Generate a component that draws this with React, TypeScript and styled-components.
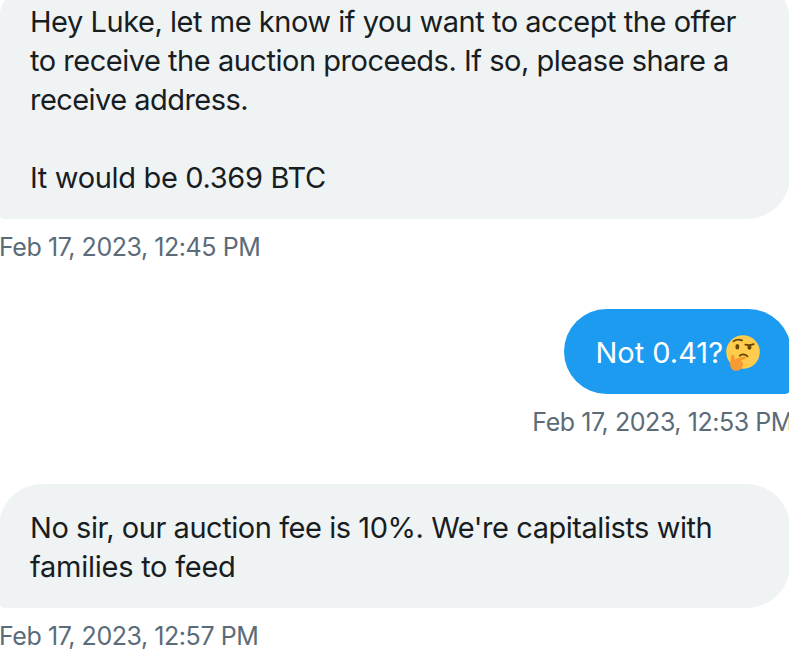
import React from "react";
import styled, { createGlobalStyle } from "styled-components";

const GlobalStyle = createGlobalStyle`
  * { box-sizing: border-box; }
  body {
    margin: 0;
    background: #fff;
    overflow: hidden;
  }
`;

type Side = "in" | "out";

const Conversation = styled.main`
  display: flex;
  flex-direction: column;
  gap: 47px;
  width: 791px;
  margin-left: -1px;
  margin-top: -22px;
  font-family: Inter, "Liberation Sans", sans-serif;
`;

const Message = styled.article<{ $side: Side }>`
  display: flex;
  flex-direction: column;
  align-items: ${(p) => (p.$side === "in" ? "stretch" : "flex-end")};
`;

const Bubble = styled.div<{ $side: Side }>`
  display: flex;
  flex-direction: column;
  padding: 24px 31px 22px;
  margin-right: ${(p) => (p.$side === "out" ? "-1px" : "0")};
  border-radius: ${(p) => (p.$side === "in" ? "43px 43px 43px 6px" : "43px 43px 6px 43px")};
  background: ${(p) => (p.$side === "in" ? "#eff3f4" : "#1d9bf0")};
  color: ${(p) => (p.$side === "in" ? "#181d22" : "#fff")};
`;

const Line = styled.span<{ $tracking: number }>`
  display: flex;
  align-items: center;
  height: 39px;
  font-size: 29px;
  line-height: 39px;
  white-space: pre;
  letter-spacing: ${(p) => p.$tracking}px;
`;

const Time = styled.time<{ $side: Side }>`
  height: 43px;
  padding-top: 11px;
  margin-right: ${(p) => (p.$side === "out" ? "-3px" : "0")};
  font-size: 25px;
  line-height: 34px;
  white-space: pre;
  letter-spacing: -0.44px;
  color: #5b6b78;
`;

const Emoji = styled.svg`
  width: 34px;
  height: 36px;
  margin-left: 3px;
`;

const ThinkingFace = () => (
  <Emoji viewBox="0 0 36 38" role="img" aria-label="Thinking face">
    <circle cx="18" cy="18" r="17.8" fill="#ffcc4d" />
    <ellipse cx="12" cy="12.4" rx="2.1" ry="2.9" fill="#664500" />
    <ellipse cx="24.800" cy="12.800" rx="2.1" ry="2.9" fill="#664500" />
    <path d="M8 6.500c2.500-1.700 6-2 9-.8" fill="none" stroke="#664500" strokeWidth="1.900" strokeLinecap="round" />
    <path d="M20.500 10.200c3 .8 6 .5 8.800-.6" fill="none" stroke="#664500" strokeWidth="2" strokeLinecap="round" />
    <path d="M14.500 21.800c2.500-1.600 6-1.400 8.300.7" fill="none" stroke="#664500" strokeWidth="1.900" strokeLinecap="round" />
    <path
      d="M5.500 21.500c1.700-1.600 3.500 0 3.800 2.100l.3 2.200c3.300-1.700 6.400-2.600 9.400-3 2.500-.3 2.900 2.200.5 2.900l-4.200 1.400c2.200.3 3.300 1.900 2.900 3.700-.7 3.900-3.300 6.900-7 6.900-4.600 0-7.300-3.400-6.800-7.700z"
      fill="#f79a32"
    />
  </Emoji>
);

export default function App() {
  return (
    <>
      <GlobalStyle />
      <Conversation>
        <Message $side="in">
          <Bubble $side="in">
            <Line $tracking={-0.46}>Hey Luke, let me know if you want to accept the offer</Line>
            <Line $tracking={-0.48}>to receive the auction proceeds. If so, please share a</Line>
            <Line $tracking={-0.55}>receive address.</Line>
            <Line $tracking={0}> </Line>
            <Line $tracking={-0.34}>It would be 0.369 BTC</Line>
          </Bubble>
          <Time $side="in">Feb 17, 2023, 12:45 PM</Time>
        </Message>
        <Message $side="out">
          <Bubble $side="out">
            <Line $tracking={0}>
              Not 0.41?
              <ThinkingFace />
            </Line>
          </Bubble>
          <Time $side="out">Feb 17, 2023, 12:53 PM</Time>
        </Message>
        <Message $side="in">
          <Bubble $side="in">
            <Line $tracking={-0.45}>No sir, our auction fee is 10%. We're capitalists with</Line>
            <Line $tracking={-0.25}>families to feed</Line>
          </Bubble>
          <Time $side="in">Feb 17, 2023, 12:57 PM</Time>
        </Message>
      </Conversation>
    </>
  );
}
